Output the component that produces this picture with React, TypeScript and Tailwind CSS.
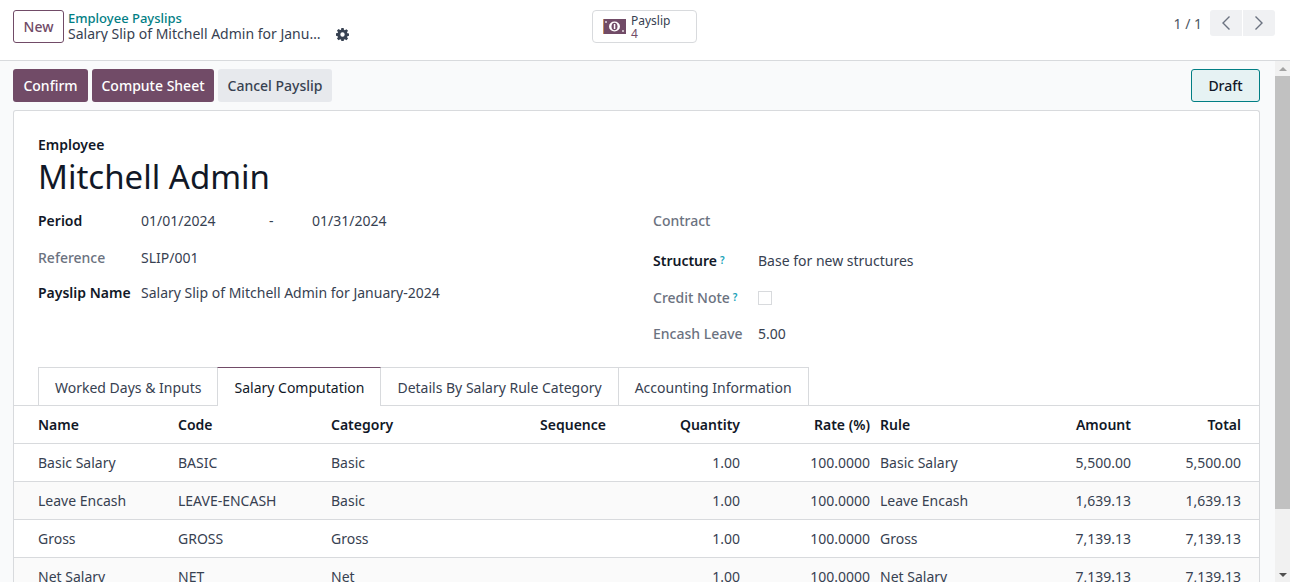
const font = { fontFamily: '"Noto Sans", sans-serif' };

const columns = [
  { label: "Name", w: "w-[140px]", right: false },
  { label: "Code", w: "w-[153px]", right: false },
  { label: "Category", w: "w-[131px]", right: false },
  { label: "Sequence", w: "w-[144px]", right: true },
  { label: "Quantity", w: "w-[134px]", right: true },
  { label: "Rate (%)", w: "w-[130px]", right: true },
  { label: "Rule", w: "w-[143px] pl-[10px]", right: false },
  { label: "Amount", w: "w-[118px]", right: true },
  { label: "Total", w: "w-[110px]", right: true },
];

const rows = [
  ["Basic Salary", "BASIC", "Basic", "", "1.00", "100.0000", "Basic Salary", "5,500.00", "5,500.00"],
  ["Leave Encash", "LEAVE-ENCASH", "Basic", "", "1.00", "100.0000", "Leave Encash", "1,639.13", "1,639.13"],
  ["Gross", "GROSS", "Gross", "", "1.00", "100.0000", "Gross", "7,139.13", "7,139.13"],
  ["Net Salary", "NET", "Net", "", "1.00", "100.0000", "Net Salary", "7,139.13", "7,139.13"],
];

function Gear() {
  return (
    <svg width="13" height="13" viewBox="0 0 16 16" fill="#374151">
      <path fillRule="evenodd" d="M6.6 0h2.8l.4 2.2c.4.1.8.3 1.1.5l1.900-1.300 2 2-1.300 1.900c.2.3.4.7.5 1.100l2 .4v2.800l-2 .4c-.1.4-.3.8-.5 1.100l1.300 1.900-2 2-1.900-1.300c-.3.2-.7.4-1.100.5l-.4 2.200H6.600l-.4-2.200c-.4-.1-.8-.3-1.100-.5l-1.900 1.300-2-2 1.300-1.900c-.2-.3-.4-.7-.5-1.100L0 9.400V6.600l2-.4c.1-.4.3-.8.5-1.100L1.200 3.200l2-2 1.900 1.300c.3-.2.7-.4 1.100-.5zM8 5.300a2.700 2.700 0 1 0 0 5.400 2.700 2.700 0 0 0 0-5.400z" />
    </svg>
  );
}

function Money() {
  return (
    <svg width="23" height="15" viewBox="0 0 23 15">
      <rect width="23" height="15" fill="#714b67" />
      <rect x="0" y="0" width="1" height="15" fill="#c58a5a" />
      <ellipse cx="11.500" cy="7.500" rx="5.500" ry="5" fill="#ffffff" />
      <ellipse cx="11.500" cy="7.500" rx="3" ry="3.800" fill="#714b67" />
      <rect x="10.800" y="5" width="1.500" height="5" fill="#ffffff" />
      <rect x="2" y="2" width="2" height="2" fill="#ffffff" opacity="0.6" />
      <rect x="19" y="11" width="2" height="2" fill="#ffffff" opacity="0.6" />
    </svg>
  );
}

function Help() {
  return <sup className="ml-[3px] text-[10px] font-semibold leading-none text-[#17a2b8] relative -top-[2px]">?</sup>;
}

export default function App() {
  return (
    <div style={font} className="flex h-[582px] w-[1290px] flex-col overflow-hidden bg-white text-[14px] text-[#374151]">
      <header className="flex h-[61px] shrink-0 items-start border-b border-[#d8dadd] bg-white pl-[13px] pr-[15px]">
        <div className="flex w-[579px] shrink-0 items-start pt-[10px]">
          <button className="flex h-[33px] w-[51px] items-center justify-center rounded-[3px] border border-[#714b67] font-medium text-[#714b67]">New</button>
          <div className="ml-[4px] flex flex-col leading-[18px]">
            <span className="text-[13px] font-medium leading-[16px] text-[#017e84]">Employee Payslips</span>
            <div className="flex items-center">
              <span className="w-[259px] truncate leading-[16px] text-[#374151]">Salary Slip of Mitchell Admin for January-2024</span>
              <span className="ml-[9px]"><Gear /></span>
            </div>
          </div>
        </div>
        <div className="mt-[10px] flex h-[33px] w-[105px] items-center rounded-[4px] border border-[#d8dadd] pl-[10px]">
          <Money />
          <div className="ml-[5px] flex flex-col text-[12px] leading-[13px]">
            <span className="text-[#374151]">Payslip</span>
            <span className="text-[#714b67]">4</span>
          </div>
        </div>
        <div className="ml-auto mt-[10px] flex items-center">
          <span className="mr-[8px] text-[#4b5563]">1 / 1</span>
          <div className="flex h-[26px] gap-px">
            <button className="flex h-full w-[32px] items-center justify-center rounded-l-[3px] bg-[#f0f1f3]">
              <svg width="10" height="16" viewBox="0 0 10 16" fill="none" stroke="#6b7280" strokeWidth="1.400"><path d="M8.500 1.500 2 8l6.500 6.500" /></svg>
            </button>
            <button className="flex h-full w-[32px] items-center justify-center rounded-r-[3px] bg-[#f0f1f3]">
              <svg width="10" height="16" viewBox="0 0 10 16" fill="none" stroke="#6b7280" strokeWidth="1.400"><path d="M1.500 1.500 8 8l-6.500 6.500" /></svg>
            </button>
          </div>
        </div>
      </header>

      <div className="flex min-h-0 flex-1">
        <main className="min-w-0 flex-1 bg-[#f9fafb] pl-[13px] pr-[15px]">
          <div className="flex h-[49px] items-start justify-between pt-[8px]">
            <div className="flex gap-[4px]">
              <button className="h-[33px] w-[75px] rounded-[3px] bg-[#714b67] font-medium text-white">Confirm</button>
              <button className="h-[33px] w-[122px] rounded-[3px] bg-[#714b67] font-medium text-white">Compute Sheet</button>
              <button className="h-[33px] w-[114px] rounded-[3px] bg-[#e7e9ed] font-medium text-[#374151]">Cancel Payslip</button>
            </div>
            <div className="flex h-[33px] w-[69px] items-center justify-center rounded-[3px] border border-[#017e84] bg-[#e6f2f3] font-medium text-[#111827]">Draft</div>
          </div>

          <section className="rounded-t-[3px] border border-b-0 border-[#d8dadd] bg-white">
            <div className="px-[24px] pt-[26px]">
              <div className="font-semibold leading-[16px] text-[#111827]">Employee</div>
              <div className="mt-[2px] text-[33px] leading-[44px] text-[#111827]">Mitchell Admin</div>
              <div className="mt-[11px] flex">
                <div className="w-[615px] shrink-0">
                  <div className="flex h-[21px] items-center">
                    <span className="w-[103px] font-semibold text-[#111827]">Period</span>
                    <span className="w-[128px]">01/01/2024</span>
                    <span className="w-[43px]">-</span>
                    <span>01/31/2024</span>
                  </div>
                  <div className="mt-[16px] flex h-[21px] items-center">
                    <span className="w-[103px] font-medium text-[#6b7280]">Reference</span>
                    <span>SLIP/001</span>
                  </div>
                  <div className="mt-[14px] flex h-[21px] items-center">
                    <span className="w-[103px] font-semibold text-[#111827]">Payslip Name</span>
                    <span>Salary Slip of Mitchell Admin for January-2024</span>
                  </div>
                </div>
                <div>
                  <div className="flex h-[21px] items-center font-medium text-[#6b7280]">Contract</div>
                  <div className="mt-[19px] flex h-[21px] items-center">
                    <span className="w-[105px] font-semibold text-[#111827]">Structure<Help /></span>
                    <span>Base for new structures</span>
                  </div>
                  <div className="mt-[16px] flex h-[21px] items-center">
                    <span className="w-[105px] font-medium text-[#6b7280]">Credit Note<Help /></span>
                    <span className="h-[14px] w-[14px] border border-[#d8dadd] bg-white"></span>
                  </div>
                  <div className="mt-[15px] flex h-[21px] items-center">
                    <span className="w-[105px] font-medium text-[#6b7280]">Encash Leave</span>
                    <span>5.00</span>
                  </div>
                </div>
              </div>
            </div>

            <div className="mt-[23px] flex h-[39px] border-b border-[#d8dadd] pl-[24px]">
              <div className="h-[39px] border border-r-0 border-[#d8dadd] px-[16px] pt-[9px]">Worked Days &amp; Inputs</div>
              <div className="h-[39px] border-x border-t border-[#d8dadd] border-t-[#714b67] bg-white px-[16px] pt-[9px] text-[#111827]">Salary Computation</div>
              <div className="h-[39px] border-y border-r border-[#d8dadd] px-[16px] pt-[9px]">Details By Salary Rule Category</div>
              <div className="h-[39px] border-y border-r border-[#d8dadd] px-[16px] pt-[9px]">Accounting Information</div>
            </div>

            <div className="flex h-[38px] items-center border-b border-[#d8dadd] px-[24px] font-semibold text-[#111827]">
              {columns.map((c) => (
                <div key={c.label} className={`${c.w} shrink-0 ${c.right ? "text-right" : ""}`}>{c.label}</div>
              ))}
            </div>
            {rows.map((r, i) => (
              <div key={r[0]} className={`flex h-[38px] items-center border-b border-[#d8dadd] px-[24px] ${i % 2 === 1 ? "bg-[#fafafa]" : "bg-white"}`}>
                {r.map((v, j) => (
                  <div key={j} className={`${columns[j].w} shrink-0 ${columns[j].right ? "text-right" : ""}`}>{v}</div>
                ))}
              </div>
            ))}
          </section>
        </main>

        <div className="flex w-[15px] shrink-0 flex-col items-center bg-[#f1f1f1]">
          <div className="flex h-[15px] w-full items-center justify-center">
            <svg width="8" height="4" viewBox="0 0 8 4" fill="#a3a3a3"><path d="M4 0l4 4H0z" /></svg>
          </div>
          <div className="h-[433px] w-full bg-[#c1c1c1]"></div>
          <div className="mt-auto flex h-[15px] w-full items-center justify-center">
            <svg width="8" height="4" viewBox="0 0 8 4" fill="#505050"><path d="M0 0h8L4 4z" /></svg>
          </div>
        </div>
      </div>
    </div>
  );
}
